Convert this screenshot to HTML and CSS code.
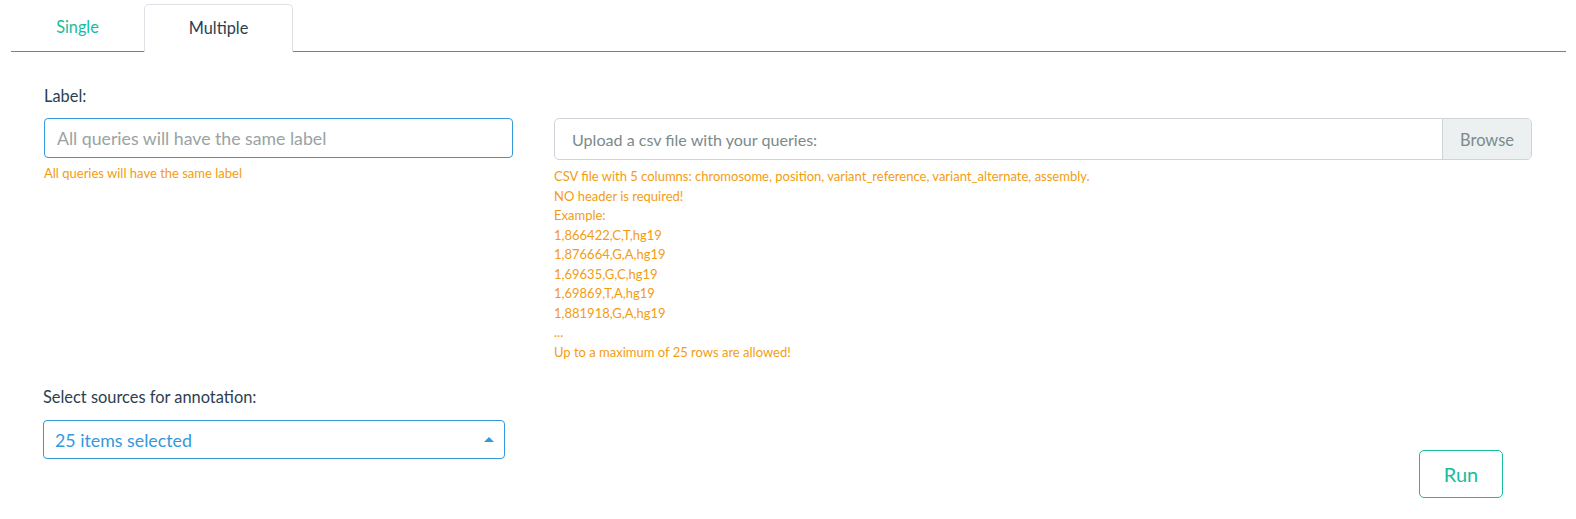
FILE: index.html
```html
<!DOCTYPE html>
<html>
<head>
<meta charset="utf-8">
<link rel="stylesheet" href="styles.css">
</head>
<body>
<div class="page">
  <ul class="tabs">
    <li class="tab"><span class="tab-link">Single</span></li>
    <li class="tab active"><span class="tab-link">Multiple</span></li>
  </ul>
  <div class="form">
    <div class="row">
      <div class="col-left">
        <div class="label">Label:</div>
        <div class="text-input">All queries will have the same label</div>
        <div class="help">All queries will have the same label</div>
      </div>
      <div class="col-right">
        <div class="file-input">
          <div class="file-text">Upload a csv file with your queries:</div>
          <div class="file-btn">Browse</div>
        </div>
        <div class="help help-file">
          <div>CSV file with 5 columns: chromosome, position, variant_reference, variant_alternate, assembly.</div>
          <div>NO header is required!</div>
          <div>Example:</div>
          <div>1,866422,C,T,hg19</div>
          <div>1,876664,G,A,hg19</div>
          <div>1,69635,G,C,hg19</div>
          <div>1,69869,T,A,hg19</div>
          <div>1,881918,G,A,hg19</div>
          <div>...</div>
          <div>Up to a maximum of 25 rows are allowed!</div>
        </div>
      </div>
    </div>
    <div class="sources">
      <div class="label">Select sources for annotation:</div>
      <div class="select">
        <span>25 items selected</span>
        <span class="caret"></span>
      </div>
    </div>
    <div class="actions">
      <button class="run">Run</button>
    </div>
  </div>
</div>
</body>
</html>
```

FILE: styles.css
```css
html, body {
  margin: 0;
  padding: 0;
  background: #ffffff;
}
body {
  font-family: Lato, "Open Sans", sans-serif;
  color: #2c3e50;
}
.page {
  padding: 4px 10px 0 11px;
}
.tabs {
  list-style: none;
  margin: 0;
  padding: 0;
  display: flex;
  border-bottom: 1px solid #3f8fd2;
  height: 47px;
}
.tab {
  width: 133px;
  display: flex;
  align-items: center;
  justify-content: center;
  font-size: 16.3px;
  color: #18bc9c;
  padding-bottom: 2px;
  box-sizing: border-box;
}
.tab.active {
  width: 149px;
  color: #2c3e50;
  background: #fff;
  border: 1px solid #dee2e6;
  border-bottom: none;
  border-radius: 5px 5px 0 0;
  height: 48px;
}
.form {
  padding: 34px 0 0 33px;
}
.row {
  display: grid;
  grid-template-columns: 469px 978px;
  column-gap: 41px;
}
.label {
  font-size: 16.4px;
  line-height: 19px;
  color: #2c3e50;
}
.col-left .label {
  margin-bottom: 13px;
}
.text-input {
  height: 40px;
  box-sizing: border-box;
  border: 1px solid #3498db;
  border-radius: 4px;
  padding: 0 12px;
  display: flex;
  align-items: center;
  font-size: 17.7px;
  color: #99a3a4;
}
.help {
  font-size: 13px;
  line-height: 19.5px;
  color: #f39c12;
}
.col-left .help {
  margin-top: 6px;
}
.col-right {
  padding-top: 32px;
}
.file-input {
  height: 42px;
  box-sizing: border-box;
  border: 1px solid #ced4da;
  border-radius: 5px;
  display: flex;
  overflow: hidden;
}
.file-text {
  flex: 1;
  display: flex;
  align-items: center;
  padding-left: 17px;
  font-size: 16.1px;
  color: #7b8a8b;
}
.file-btn {
  width: 88px;
  background: #ecf0f1;
  border-left: 1px solid #ced4da;
  display: flex;
  align-items: center;
  justify-content: center;
  font-size: 16.4px;
  color: #7b8a8b;
}
.help-file {
  margin-top: 7px;
}
.sources {
  margin-top: 25px;
  margin-left: -1px;
  width: 462px;
}
.sources .label {
  margin-bottom: 14px;
}
.select {
  height: 39px;
  box-sizing: border-box;
  border: 1px solid #3498db;
  border-radius: 4px;
  display: flex;
  align-items: center;
  justify-content: space-between;
  padding: 0 10px 0 11px;
  font-size: 17.8px;
  color: #3498db;
}
.caret {
  width: 0;
  height: 0;
  border-left: 5px solid transparent;
  border-right: 5px solid transparent;
  border-bottom: 5px solid #3498db;
}
.actions {
  display: flex;
  justify-content: flex-end;
  width: 1459px;
  margin-top: -9px;
}
.run {
  width: 84px;
  height: 48px;
  background: #fff;
  border: 1px solid #18bc9c;
  border-radius: 5px;
  color: #18bc9c;
  font-family: Lato, "Open Sans", sans-serif;
  font-size: 20px;
  padding: 0;
}
```
